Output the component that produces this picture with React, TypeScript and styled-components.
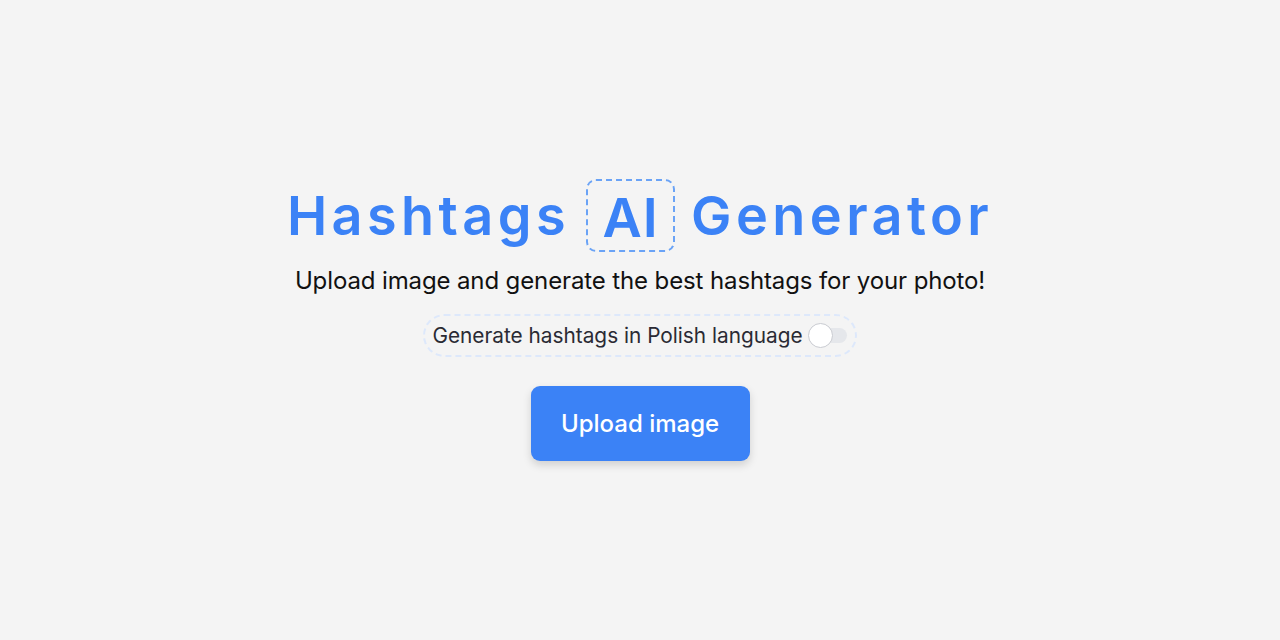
import React, { useState } from "react";
import styled, { createGlobalStyle } from "styled-components";

const Global = createGlobalStyle`
  html, body { margin: 0; padding: 0; background: #f4f4f4; }
  body { font-family: Inter, "Noto Sans", sans-serif; }
`;

const Page = styled.main`
  height: 640px;
  display: flex;
  flex-direction: column;
  align-items: center;
  justify-content: center;
`;

const Title = styled.h1`
  margin: 0;
  display: flex;
  align-items: center;
  gap: 16px;
  font-size: 54px;
  font-weight: 600;
  letter-spacing: 0.082em;
  color: #3b82f6;
  line-height: 1;
`;

const AiBox = styled.span`
  display: inline-flex;
  align-items: center;
  justify-content: center;
  width: 89px;
  height: 73px;
  border: 2.5px dashed #6aa3f6;
  border-radius: 10px;
  letter-spacing: 0.02em;
  padding-top: 4px;
  box-sizing: border-box;
`;

const Subtitle = styled.p`
  margin: 14px 0 0;
  font-size: 24px;
  color: #111;
  letter-spacing: -0.005em;
`;

const ToggleRow = styled.label`
  margin-top: 19px;
  display: flex;
  align-items: center;
  gap: 6px;
  padding: 7px 8px 7px 7px;
  border: 2px dashed #dde8fb;
  border-radius: 999px;
  font-size: 20.8px;
  color: #2a2a33;
  cursor: pointer;
`;

const Track = styled.span`
  position: relative;
  width: 38px;
  height: 15px;
  border-radius: 999px;
  background: #e5e7eb;
`;

const Knob = styled.span<{ $on: boolean }>`
  position: absolute;
  top: 50%;
  left: ${(p) => (p.$on ? "14px" : "-1px")};
  width: 23px;
  height: 23px;
  margin-top: -12.5px;
  border-radius: 50%;
  background: #fff;
  border: 1px solid #c9cbd1;
`;

const UploadButton = styled.button`
  margin-top: 29px;
  width: 219px;
  height: 75px;
  border: none;
  border-radius: 9px;
  background: #3b82f6;
  color: #fff;
  font-family: inherit;
  font-size: 24px;
  font-weight: 500;
  box-shadow: 0 4px 8px rgba(0, 0, 0, 0.15);
  cursor: pointer;
`;

export default function App() {
  const [on, setOn] = useState(false);
  return (
    <>
      <Global />
      <Page>
        <Title>
          <span>Hashtags</span>
          <AiBox>AI</AiBox>
          <span>Generator</span>
        </Title>
        <Subtitle>Upload image and generate the best hashtags for your photo!</Subtitle>
        <ToggleRow onClick={() => setOn(!on)}>
          Generate hashtags in Polish language
          <Track>
            <Knob $on={on} />
          </Track>
        </ToggleRow>
        <UploadButton>Upload image</UploadButton>
      </Page>
    </>
  );
}
